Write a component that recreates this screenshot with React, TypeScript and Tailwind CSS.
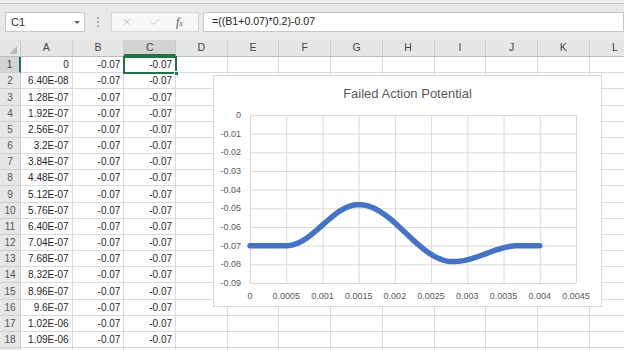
import { Check, X } from "lucide-react";

const COLS = ["A", "B", "C", "D", "E", "F", "G", "H", "I", "J", "K", "L"];

const colA: string[] = [
  "0",
  "6.40E-08",
  "1.28E-07",
  "1.92E-07",
  "2.56E-07",
  "3.2E-07",
  "3.84E-07",
  "4.48E-07",
  "5.12E-07",
  "5.76E-07",
  "6.40E-07",
  "7.04E-07",
  "7.68E-07",
  "8.32E-07",
  "8.96E-07",
  "9.6E-07",
  "1.02E-06",
  "1.09E-06",
];

// chart geometry, relative to the chart box
const PX = 37;
const PY = 40;
const PW = 326;
const PH = 168;

const xAt = (t: number) => PX + (t / 4.5) * PW;
const yAt = (v: number) => PY + (-v / 0.09) * PH;

const ease = (p: number) => (1 - Math.cos(Math.PI * p)) / 2;

// membrane potential, t in ms
const potential = (t: number) => {
  if (t <= 0.5) return -0.07;
  if (t <= 1.5) return -0.07 + 0.022 * ease((t - 0.5) / 1.0);
  if (t <= 2.8) return -0.048 - 0.0305 * ease((t - 1.5) / 1.3);
  if (t <= 3.72) return -0.0785 + 0.0085 * ease((t - 2.8) / 0.92);
  return -0.07;
};

const curve = (() => {
  const pts: string[] = [];
  for (let i = 0; i <= 200; i++) {
    const t = (i / 200) * 4;
    pts.push(`${xAt(t).toFixed(2)},${yAt(potential(t)).toFixed(2)}`);
  }
  return "M" + pts.join(" L");
})();

const yTicks = ["0", "-0.01", "-0.02", "-0.03", "-0.04", "-0.05", "-0.06", "-0.07", "-0.08", "-0.09"];
const xTicks = ["0", "0.0005", "0.001", "0.0015", "0.002", "0.0025", "0.003", "0.0035", "0.004", "0.0045"];

const Chart = () => (
  <div className="absolute left-[213px] top-[75px] h-[232px] w-[389px] border border-[#d9d9d9] bg-white">
    <div className="pt-[9px] text-center text-[13px] leading-[18px] text-[#595959]">
      Failed Action Potential
    </div>
    <svg className="absolute left-[-1px] top-[-1px]" width="389" height="232">
      {yTicks.map((label, i) => (
        <g key={label}>
          <line x1={PX} x2={PX + PW} y1={PY + i * (PH / 9) + 0.5} y2={PY + i * (PH / 9) + 0.5} stroke="#d9d9d9" />
          <text
            x={PX - 9}
            y={PY + i * (PH / 9) + 3}
            textAnchor="end"
            fontSize="9"
            fill="#595959"
            fontFamily="Liberation Sans, Arial, sans-serif"
          >
            {label}
          </text>
        </g>
      ))}
      {xTicks.map((label, i) => (
        <g key={label}>
          <line x1={PX + i * (PW / 9) + 0.5} x2={PX + i * (PW / 9) + 0.5} y1={PY} y2={PY + PH} stroke="#d9d9d9" />
          <text
            x={PX + i * (PW / 9)}
            y={PY + PH + 16}
            textAnchor="middle"
            fontSize="9"
            fill="#595959"
            fontFamily="Liberation Sans, Arial, sans-serif"
          >
            {label}
          </text>
        </g>
      ))}
      <path d={curve} fill="none" stroke="#4472c4" strokeWidth="5.5" strokeLinecap="round" strokeLinejoin="round" />
    </svg>
  </div>
);

const FormulaBar = () => (
  <div className="flex h-[36px] items-start bg-[#e9e9e9] pt-[8px]">
    <div className="ml-[5px] flex h-[20px] w-[80px] items-center justify-between border border-[#c6c6c6] bg-white pl-[5px] pr-[4px] text-[11px] text-[#333]">
      <span>C1</span>
      <span className="h-0 w-0 border-x-[3px] border-t-[3px] border-x-transparent border-t-[#666]" />
    </div>
    <div className="ml-[12px] mt-[5px] flex w-[2px] flex-col gap-[2px]">
      <span className="h-[2px] w-[2px] bg-[#a8a8a8]" />
      <span className="h-[2px] w-[2px] bg-[#a8a8a8]" />
      <span className="h-[2px] w-[2px] bg-[#a8a8a8]" />
    </div>
    <div className="ml-[12px] flex h-[20px] w-[88px] items-center border border-[#d6d6d6] bg-[#f7f7f7]">
      <X size={12} strokeWidth={1.5} className="ml-[9px] text-[#b4b4b4]" />
      <Check size={12} strokeWidth={1.5} className="ml-[16px] text-[#b4b4b4]" />
      <span className="ml-[15px] font-['Liberation_Serif',serif] text-[12px] italic text-[#555]">
        f<span className="text-[8px]">x</span>
      </span>
    </div>
    <div className="ml-[4px] flex h-[20px] flex-1 items-center border border-[#c6c6c6] bg-white pl-[8px] text-[10.6px] text-[#222]">
      =((B1+0.07)*0.2)-0.07
    </div>
  </div>
);

const HeaderRow = () => (
  <div className="flex h-[17px] border-b border-[#bdbdbd] bg-[#e6e6e6] text-[10.5px] text-[#444]">
    <div className="relative w-[21px] shrink-0 border-r border-[#c9c9c9]">
      <span className="absolute bottom-[2px] right-[3px] h-0 w-0 border-b-[8px] border-l-[8px] border-b-[#b8b8b8] border-l-transparent" />
    </div>
    {COLS.map((c) => (
      <div
        key={c}
        className={
          c === "C"
            ? "flex w-[51.7px] shrink-0 items-center justify-center border-b-2 border-r border-b-[#217346] border-r-[#c9c9c9] bg-[#d3d3d3] pt-[2px]"
            : "flex w-[51.7px] shrink-0 items-center justify-center border-r border-[#d0d0d0]"
        }
      >
        {c}
      </div>
    ))}
  </div>
);

const DataRow = ({ index, values }: { index: number; values: string[] }) => (
  <div className="flex h-[16.18px] text-[10px] leading-[13px]">
    <div
      className={
        index === 0
          ? "flex w-[21px] shrink-0 items-end justify-center border-b border-r-2 border-b-[#cfcfcf] border-r-[#217346] bg-[#d3d3d3] pb-[1px] text-[#444]"
          : "flex w-[21px] shrink-0 items-end justify-center border-b border-r border-[#cfcfcf] bg-[#e6e6e6] pb-[1px] text-[#555]"
      }
    >
      {values.length ? index + 1 : ""}
    </div>
    {COLS.map((c, ci) => (
      <div
        key={c}
        className="flex w-[51.7px] shrink-0 items-end justify-end border-b border-r border-[#dadada] pb-[1px] pr-[3px] text-[#1f1f1f]"
      >
        {values[ci] ?? ""}
      </div>
    ))}
  </div>
);

export default function App() {
  return (
    <div className="relative h-[350px] w-[624px] overflow-hidden bg-white font-['Liberation_Sans',Arial,sans-serif]">
      <div className="h-[4px] border-b border-[#c8c8c8] bg-[#efefef]" />
      <FormulaBar />
      <HeaderRow />
      {colA.map((a, i) => (
        <DataRow key={i} index={i} values={[a, "-0.07", "-0.07"]} />
      ))}
      {/* row 19, cut off by the window edge */}
      <DataRow index={18} values={[]} />
      {/* active cell C1 */}
      <div className="absolute left-[123px] top-[56px] h-[18px] w-[54px] border-2 border-[#217346]">
        <span className="absolute bottom-[-4px] right-[-4px] h-[5px] w-[5px] border border-white bg-[#217346]" />
      </div>
      <Chart />
    </div>
  );
}
